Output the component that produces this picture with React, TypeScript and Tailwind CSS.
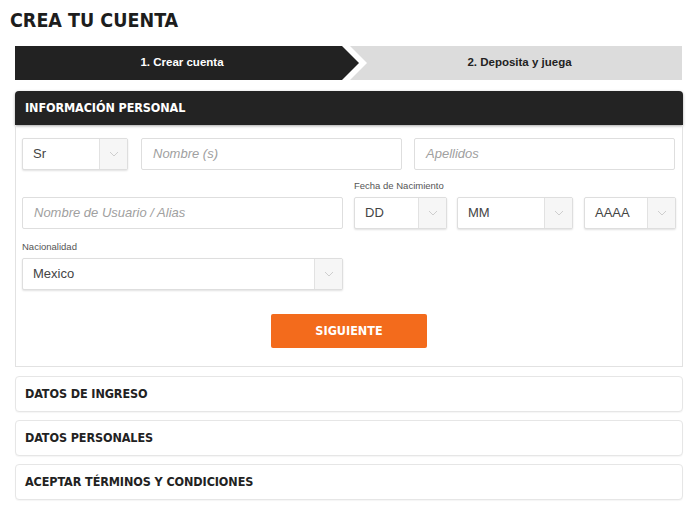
import React from 'react';

const Chevron = () => (
    <svg width="10" height="6" viewBox="0 0 10 6" fill="none">
        <path d="M1 1l4 4 4-4" stroke="#c4c4c4" strokeWidth="0.8" />
    </svg>
);

const Select = ({ value, className }: { value: string; className: string }) => (
    <div className={`flex h-[32px] items-stretch rounded-[2px] border border-[#dedede] bg-white shadow-[0_1px_2px_rgba(0,0,0,0.12)] ${className}`}>
        <div className="flex flex-1 items-center pl-[10px] text-[13px] text-[#444]">{value}</div>
        <div className="flex w-[28px] items-center justify-center border-l border-[#e2e2e2] bg-[#f6f6f6]">
            <Chevron />
        </div>
    </div>
);

const Input = ({ placeholder, className }: { placeholder: string; className: string }) => (
    <div className={`flex h-[32px] items-center rounded-[2px] border border-[#dedede] bg-white pl-[11px] text-[13px] italic text-[#a0a0a0] ${className}`}>
        {placeholder}
    </div>
);

const Section = ({ title }: { title: string }) => (
    <div className="flex h-[36px] items-center rounded-[4px] border border-[#e6e6e6] bg-white px-[9px] text-[12.5px] font-bold tracking-[-0.1px] text-[#222] shadow-[0_1px_1px_rgba(0,0,0,0.04)] [font-family:'DejaVu_Sans_Condensed',Roboto,sans-serif]">
        {title}
    </div>
);

export default function App() {
    return (
        <div className="h-[520px] w-[700px] bg-white [font-family:'Liberation_Sans',Arial,sans-serif]">
            <h1 className="pl-[10px] pt-[8px] text-[19.5px] font-bold leading-[26px] text-[#1d1d1d] [font-family:'DejaVu_Sans_Condensed',Roboto,sans-serif]">
                CREA TU CUENTA
            </h1>

            {/* Steps */}
            <div className="ml-[15px] mr-[18px] mt-[12px] flex h-[34px] bg-[#dcdcdc]">
                <div className="w-[352px] bg-white [clip-path:polygon(0_0,calc(100%-17px)_0,100%_50%,calc(100%-17px)_100%,0_100%)]">
                    <div className="flex h-full w-[344px] items-center justify-center bg-[#222] pr-[10px] text-[11.5px] font-bold text-white [clip-path:polygon(0_0,calc(100%-17px)_0,100%_50%,calc(100%-17px)_100%,0_100%)]">
                        1. Crear cuenta
                    </div>
                </div>
                <div className="flex flex-1 items-center justify-center pr-[10px] text-[11.5px] font-bold text-[#222]">
                    2. Deposita y juega
                </div>
            </div>

            {/* Personal info panel */}
            <div className="ml-[15px] mr-[17px] mt-[11px]">
                <div className="flex h-[34px] items-center rounded-t-[4px] bg-[#232323] pl-[10px] text-[12.5px] font-bold tracking-[-0.1px] text-white shadow-[0_1px_3px_rgba(0,0,0,0.35)] [font-family:'DejaVu_Sans_Condensed',Roboto,sans-serif]">
                    INFORMACIÓN PERSONAL
                </div>
                <div className="h-[242px] border border-t-0 border-[#e2e2e2] pl-[6px] pt-[13px]">
                    <div className="flex">
                        <Select value="Sr" className="w-[106px]" />
                        <Input placeholder="Nombre (s)" className="ml-[13px] w-[261px]" />
                        <Input placeholder="Apellidos" className="ml-[12px] w-[261px]" />
                    </div>
                    <div className="mt-[10px] flex items-end">
                        <Input placeholder="Nombre de Usuario / Alias" className="w-[321px]" />
                        <div className="ml-[11px]">
                            <div className="mb-[5px] text-[9.5px] leading-[12px] text-[#555]">Fecha de Nacimiento</div>
                            <div className="flex">
                                <Select value="DD" className="w-[93px]" />
                                <Select value="MM" className="ml-[10px] w-[116px]" />
                                <Select value="AAAA" className="ml-[11px] w-[92px]" />
                            </div>
                        </div>
                    </div>
                    <div className="mt-[12px] text-[9.5px] leading-[12px] text-[#555]">Nacionalidad</div>
                    <Select value="Mexico" className="mt-[5px] w-[321px]" />
                    <div className="mt-[24px] flex justify-center">
                        <button className="ml-[-6px] h-[34px] w-[156px] rounded-[2px] bg-[#f36b1c] text-[12.5px] font-bold text-white [font-family:'DejaVu_Sans_Condensed',Roboto,sans-serif]">
                            SIGUIENTE
                        </button>
                    </div>
                </div>
            </div>

            <div className="ml-[15px] mr-[17px] mt-[9px] flex flex-col gap-[8px]">
                <Section title="DATOS DE INGRESO" />
                <Section title="DATOS PERSONALES" />
                <Section title="ACEPTAR TÉRMINOS Y CONDICIONES" />
            </div>
        </div>
    );
}
